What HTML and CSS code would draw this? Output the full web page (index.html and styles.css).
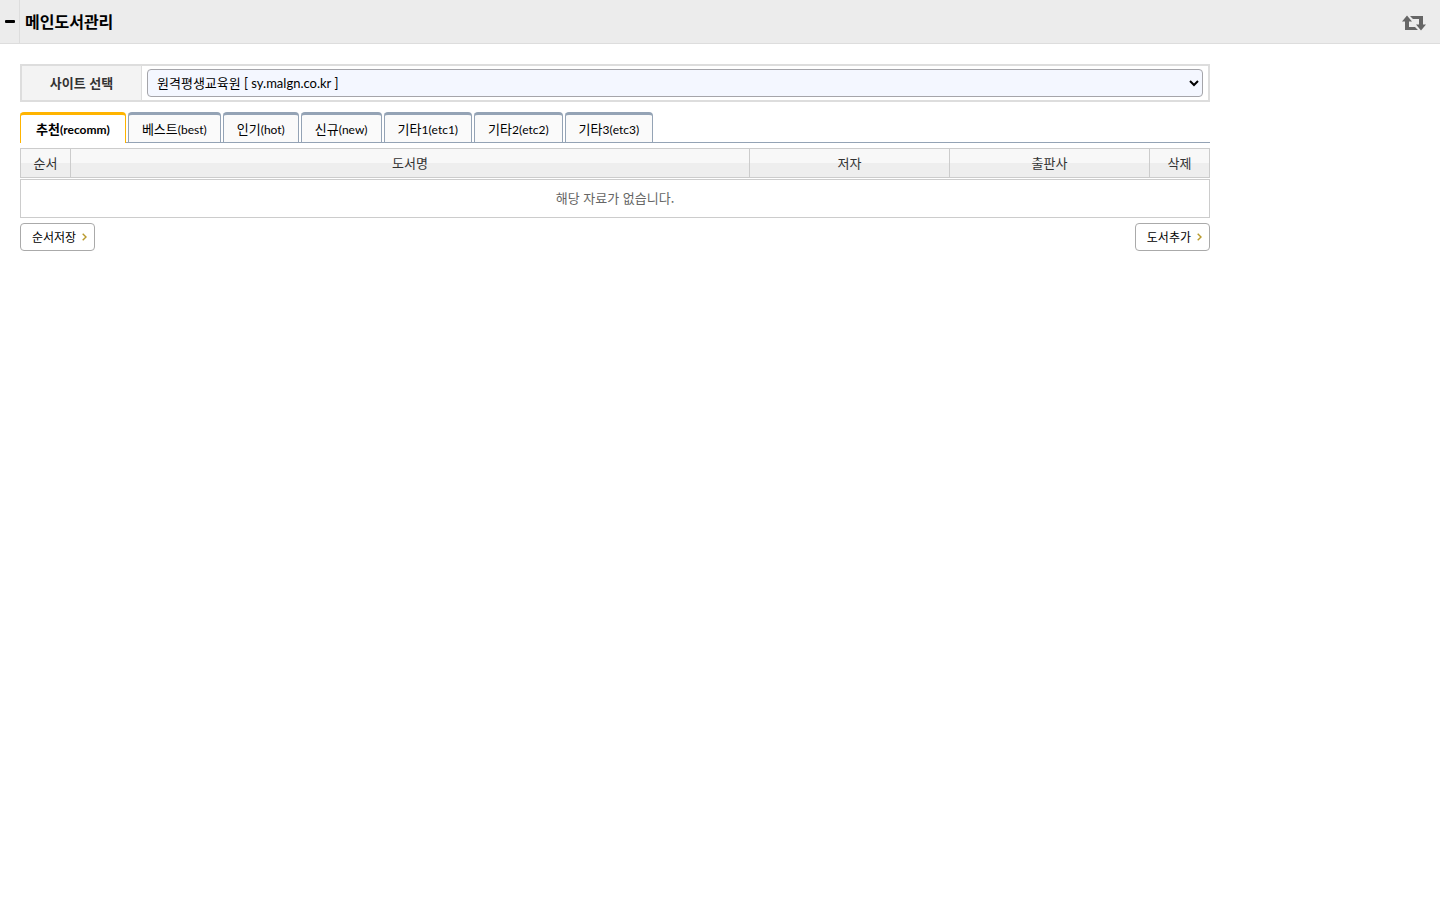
FILE: index.html
```html
<!DOCTYPE html>
<html lang="ko">
<head>
<meta charset="utf-8">
<meta name="viewport" content="width=device-width, initial-scale=1">
<title>메인도서관리</title>
<link rel="stylesheet" href="styles.css">
</head>
<body>
<header class="topbar">
  <button class="topbar-toggle" type="button" aria-label="메뉴 접기">
    <svg width="10" height="3" viewBox="0 0 10 3" aria-hidden="true"><rect width="10" height="3" rx="1" fill="#000"/></svg>
  </button>
  <h1 class="topbar-title">메인도서관리</h1>
  <button class="topbar-refresh" type="button" aria-label="새로고침">
    <svg width="24" height="16" viewBox="0 0 24 16" aria-hidden="true" fill="#666">
      <path d="M5 .5L10 6.5H7V12H13L16 15H3V6.5H0Z"/>
      <path d="M19 15.5L14 9.5H17V4H11L8 1H21V9.5H24Z"/>
    </svg>
  </button>
</header>
<main class="content">
  <form class="search">
    <label class="search-label" for="site">사이트 선택</label>
    <div class="search-field">
      <select class="search-select" id="site">
        <option>원격평생교육원 [ sy.malgn.co.kr ]</option>
      </select>
    </div>
  </form>
  <nav class="tabs">
    <a class="tab tab-active" href="#recomm">추천<span class="tab-code">(recomm)</span></a>
    <a class="tab" href="#best">베스트<span class="tab-code">(best)</span></a>
    <a class="tab" href="#hot">인기<span class="tab-code">(hot)</span></a>
    <a class="tab" href="#new">신규<span class="tab-code">(new)</span></a>
    <a class="tab" href="#etc1">기타<span class="tab-code">1(etc1)</span></a>
    <a class="tab" href="#etc2">기타<span class="tab-code">2(etc2)</span></a>
    <a class="tab" href="#etc3">기타<span class="tab-code">3(etc3)</span></a>
  </nav>
  <table class="books">
    <colgroup><col class="col-order"><col><col class="col-name"><col class="col-name"><col class="col-delete"></colgroup>
    <thead>
      <tr><th scope="col">순서</th><th scope="col">도서명</th><th scope="col">저자</th><th scope="col">출판사</th><th scope="col">삭제</th></tr>
    </thead>
    <tbody>
      <tr><td colspan="5">해당 자료가 없습니다.</td></tr>
    </tbody>
  </table>
  <div class="actions">
    <button class="action" type="button">순서저장
      <svg width="5" height="8" viewBox="0 0 5 8" aria-hidden="true"><path d="M.7 .7L4 4L.7 7.3" fill="none" stroke="#b99a2c" stroke-width="1.4"/></svg>
    </button>
    <button class="action" type="button">도서추가
      <svg width="5" height="8" viewBox="0 0 5 8" aria-hidden="true"><path d="M.7 .7L4 4L.7 7.3" fill="none" stroke="#b99a2c" stroke-width="1.4"/></svg>
    </button>
  </div>
</main>
</body>
</html>
```
FILE: styles.css
```css
* {
  box-sizing: border-box;
}

body {
  margin: 0;
  background: #fff;
  color: #000;
  font: 13px/20px "Noto Sans CJK KR", sans-serif;
}

button,
select {
  font-family: inherit;
  color: inherit;
}

.topbar {
  display: flex;
  align-items: stretch;
  height: 44px;
  background: #ececec;
  border-bottom: 1px solid #ddd;
}

.topbar-toggle {
  display: flex;
  align-items: center;
  justify-content: center;
  width: 20px;
  padding: 0;
  background: none;
  border: 0;
  border-right: 1px solid #ddd;
}

.topbar-title {
  flex: 1;
  margin: 0;
  padding-left: 5px;
  font-size: 16px;
  line-height: 43px;
  font-weight: bold;
}

.topbar-refresh {
  display: flex;
  align-items: center;
  padding: 2px 14px 0;
  background: none;
  border: 0;
}

.content {
  max-width: 1230px;
  padding: 20px;
}

.search {
  display: flex;
  border: 2px solid #ddd;
}

.search-label {
  display: flex;
  align-items: center;
  justify-content: center;
  width: 120px;
  background: #f3f3f3;
  border-right: 1px solid #ddd;
  color: #333;
  font-weight: bold;
}

.search-field {
  flex: 1;
  padding: 3px 5px;
}

.search-select {
  display: block;
  width: 100%;
  height: 28px;
  padding: 0 5px;
  background-color: #f4f7ff;
  border: 1px solid #a5a5aa;
  border-radius: 4px;
  font-family: Lato, "Noto Sans CJK KR", sans-serif;
  font-size: 13px;
}

.tabs {
  display: flex;
  gap: 2px;
  margin-top: 10px;
  border-bottom: 1px solid #94a3b5;
}

.tab {
  padding: 4px 13px 3px;
  background: #fafafa;
  border: 1px solid #94a3b5;
  border-width: 3px 1px 0;
  border-radius: 4px 4px 0 0;
  color: #000;
  text-decoration: none;
  white-space: nowrap;
}

.tab-active {
  margin-bottom: -1px;
  padding: 4px 15px;
  background: #fff;
  border-color: #ffb400;
  font-weight: bold;
}

.tab-code {
  font-family: Lato, sans-serif;
  font-size: 12px;
  line-height: 12px;
}

.books {
  width: 100%;
  margin-top: 4px;
  table-layout: fixed;
  border-collapse: separate;
  border-spacing: 0 1px;
}

.col-order {
  width: 51px;
}

.col-name {
  width: 200px;
}

.col-delete {
  width: 60px;
}

.books th {
  height: 30px;
  padding: 0;
  background: linear-gradient(#f8f8f8 50%, #eee 50%);
  border: 1px solid #ccc;
  border-left-width: 0;
  color: #333;
  font-weight: normal;
}

.books th:first-child {
  border-left-width: 1px;
}

.books td {
  height: 39px;
  padding: 0 0 2px;
  border: 1px solid #ccc;
  color: #666;
  text-align: center;
}

.actions {
  display: flex;
  justify-content: space-between;
  margin-top: 4px;
}

.action {
  display: flex;
  align-items: center;
  gap: 6px;
  height: 28px;
  padding: 0 7px 1px 11px;
  background: #fff;
  border: 1px solid #aaa;
  border-radius: 4px;
  font-size: 12px;
}
```
